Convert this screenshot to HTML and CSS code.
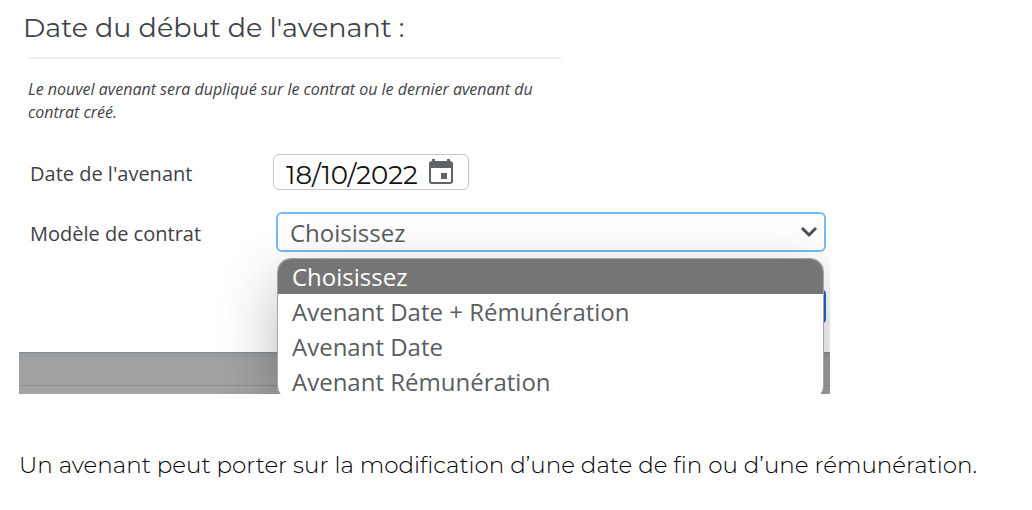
FILE: index.html
```
<!DOCTYPE html>
<html lang="fr">
   <head>
      <meta charset="utf-8">
      <title>Avenant</title>
      <link rel="stylesheet" href="styles.css">
   </head>
   <body>
      <main class="content">
         <section class="capture">
            <form class="dialog">
               <h1 class="title">Date du début de l'avenant :</h1>
               <p class="note">Le nouvel avenant sera dupliqué sur le contrat ou le dernier avenant du contrat créé.</p>
               <div class="row">
                  <label class="label" for="date">Date de l'avenant</label>
                  <div class="date-field">
                     <input class="date-input" id="date" type="text" value="18/10/2022">
                     <button class="date-button" type="button" aria-label="Calendrier">
                        <svg width="24" height="26" viewBox="0 0 24 26">
                           <path fill="#5f6368" fill-rule="evenodd" d="M3 0h3v2h12V0h3v2a3 3 0 0 1 3 3v17a3 3 0 0 1-3 3H3a3 3 0 0 1-3-3V5a3 3 0 0 1 3-3zM2 9v13q0 1 1 1h18q1 0 1-1V9zM12 14h6v6h-6z"/>
                        </svg>
                     </button>
                  </div>
               </div>
               <div class="row">
                  <label class="label" for="model">Modèle de contrat</label>
                  <div class="select-field">
                     <select class="select" id="model">
                        <option>Choisissez</option>
                        <option>Avenant Date + Rémunération</option>
                        <option>Avenant Date</option>
                        <option>Avenant Rémunération</option>
                     </select>
                     <svg class="chevron" width="18" height="12" viewBox="0 0 18 12">
                        <path fill="none" stroke="#495057" stroke-width="3" stroke-linejoin="round" d="M2 2l7 7 7-7"/>
                     </svg>
                     <ul class="menu" role="listbox">
                        <li class="option selected" role="option" aria-selected="true">Choisissez</li>
                        <li class="option" role="option">Avenant Date + Rémunération</li>
                        <li class="option" role="option">Avenant Date</li>
                        <li class="option" role="option">Avenant Rémunération</li>
                     </ul>
                  </div>
               </div>
               <div class="actions">
                  <button class="submit" type="button" aria-label="Valider"></button>
               </div>
            </form>
            <div class="backdrop"></div>
         </section>
         <p class="text">Un avenant peut porter sur la modification d’une date de fin ou d’une rémunération.</p>
      </main>
   </body>
</html>
```
FILE: styles.css
```
* {
   box-sizing: border-box;
}
body {
   margin: 0;
   background: #fff;
   font-family: "Open Sans", "Noto Sans", sans-serif;
   color: #3f4246;
}
.content {
   padding: 0 19px;
}
.capture {
   max-width: 811px;
   overflow: hidden;
}
.dialog {
   padding: 8px 4px 28px;
   border-bottom: 1px solid #868b90;
}
.title {
   margin: 0;
   font-family: Montserrat, Inter, sans-serif;
   font-size: 27px;
   font-weight: 400;
   line-height: 40px;
}
.note {
   max-width: 533px;
   margin: 9px 5px 0;
   padding-top: 19px;
   border-top: 2px solid #efefef;
   font-size: 16px;
   font-style: italic;
   line-height: 23px;
}
.row {
   display: flex;
   align-items: center;
   margin-top: 22px;
   padding-left: 7px;
}
.note + .row {
   margin-top: 30px;
}
.label {
   flex: 0 0 246px;
   padding-top: 3px;
   font-size: 20px;
   line-height: 28px;
}
.date-field {
   display: flex;
   align-items: center;
   gap: 9px;
   height: 36px;
   margin-left: -3px;
   padding: 0 15px 0 12px;
   border: 1px solid #c8c8c8;
   border-radius: 6px;
}
.date-input {
   width: 134px;
   padding: 6px 0 0;
   border: 0;
   background: none;
   font-family: Montserrat, Inter, sans-serif;
   font-size: 26px;
   font-weight: 400;
   line-height: 28px;
   color: #111;
}
.date-button {
   display: flex;
   padding: 0;
   border: 0;
   background: none;
}
.select-field {
   position: relative;
   flex: 1;
}
.select {
   display: block;
   width: 100%;
   height: 40px;
   padding: 0 12px;
   appearance: none;
   border: 2px solid #75b9f5;
   border-radius: 6px;
   background: #fff;
   font-family: inherit;
   font-size: 24px;
   color: #5a5d61;
}
.chevron {
   position: absolute;
   top: 14px;
   right: 8px;
}
.menu {
   position: absolute;
   top: 47px;
   left: 2px;
   right: 3px;
   margin: 0;
   padding: 0;
   overflow: hidden;
   border-radius: 13px;
   background: #fff;
   box-shadow: 0 0 0 1px #a5a5a5, 0 20px 60px rgba(0, 0, 0, 0.28);
   list-style: none;
}
.option {
   padding-left: 14px;
   font-size: 24px;
   line-height: 35px;
   color: #5a5d61;
}
.option.selected {
   background: #757575;
   color: #fff;
}
.actions {
   display: flex;
   justify-content: flex-end;
   margin-top: 37px;
}
.submit {
   width: 120px;
   height: 35px;
   border: 0;
   border-radius: 5px;
   background: #1b6ac0;
}
.backdrop {
   height: 41px;
   padding-top: 32px;
   background: linear-gradient(#979ca0, #a2a2a2 8px);
}
.backdrop::before {
   content: "";
   display: block;
   border-top: 1px solid #8f8f8f;
}
.text {
   margin: 53px 0 0;
   font-family: Montserrat, Inter, sans-serif;
   font-size: 23px;
   font-weight: 300;
   line-height: 36px;
   color: #000;
}
```
